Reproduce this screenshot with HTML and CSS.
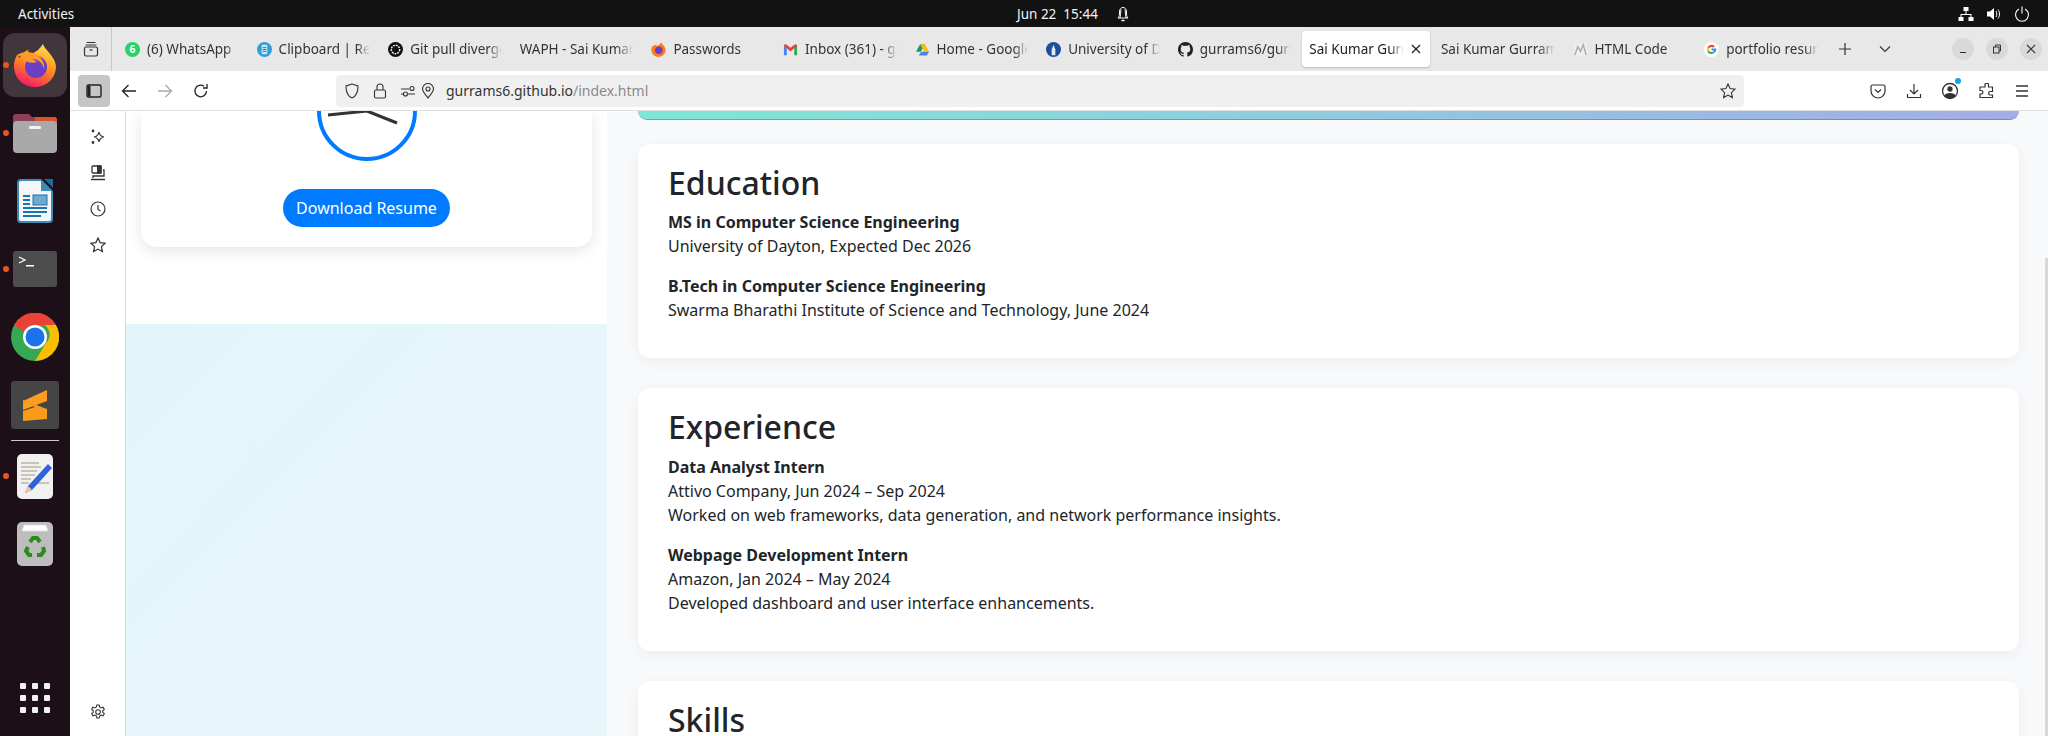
FILE: index.html
```html
<!DOCTYPE html>
<html lang="en">
<head>
    <meta charset="UTF-8">
    <meta name="viewport" content="width=device-width, initial-scale=1.0">
    <title>Sai Kumar Gurram</title>
    <link rel="stylesheet" href="styles.css">
</head>
<body>
    <header class="topbar">
        <span class="activities">Activities</span>
        <div class="topbar-clock">
            <span>Jun 22&nbsp;&nbsp;15:44</span>
            <svg class="bell" width="14" height="16" viewBox="0 0 14 16" fill="none" stroke="#fff" stroke-width="1"><path d="M2 12c1.500-1.500 1.500-3 1.500-6C3.500 3 5 1.500 7 1.500S10.500 3 10.500 6c0 3 0 4.500 1.500 6z"/><path d="M5 3.500C4.500 7 4.500 10 4 12M9 3.500c.5 3.500.5 6.500 1 8.500"/><path d="M5.500 14.500h3" stroke-width="1.500"/></svg>
        </div>
        <div class="topbar-status">
            <svg width="16" height="16" viewBox="0 0 16 16" fill="#fff"><rect x="5.500" y="1" width="5" height="4"/><rect x="0.500" y="11" width="5" height="4"/><rect x="10.500" y="11" width="5" height="4"/><path d="M7.500 5h1v3h5v3h-1V9h-9v2h-1V8h5z"/></svg>
            <svg width="16" height="16" viewBox="0 0 16 16" fill="#fff"><path d="M1 5.500h3L8 2v12l-4-3.500H1z"/><path d="M10 5c1 1.500 1 4.500 0 6M12 3.500c2 2.500 2 6.500 0 9" fill="none" stroke="#fff"/></svg>
            <svg width="16" height="16" viewBox="0 0 16 16" fill="none" stroke="#fff" stroke-width="1.100"><path d="M5 3a6.500 6.500 0 1 0 6 0M8 .5v7"/></svg>
        </div>
    </header>

    <div class="desktop">
        <nav class="dock">
            <div class="dock-item dock-item-active">
                <i class="dock-dot"></i>
                <svg width="44" height="44" viewBox="0 0 44 44">
                    <defs>
                        <linearGradient id="fx" x1="0.700" y1="0" x2="0.300" y2="1"><stop offset="0" stop-color="#ffe14a"/><stop offset="0.500" stop-color="#ff8a1f"/><stop offset="1" stop-color="#f5156c"/></linearGradient>
                    </defs>
                    <path d="M30 1c1 5 12 12 13 22 0 12-9 21-21 21S1 35 1 23c0-5 2-10 4-12 0 2 1 3 2 4 1-4 6-8 9-8-2 3-3 4-3 5 5-1 11-2 17-11z" fill="url(#fx)"/>
                    <circle cx="23" cy="24" r="11" fill="#6b3fc4"/>
                    <path d="M4 12c6-4 14-4 20 0 5 3 8 8 7 14-1-6-6-10-12-10 3 1 5 3 5 3-6 2-12 0-15-5z" fill="#ff9a2a"/>
                </svg>
            </div>
            <div class="dock-item">
                <i class="dock-dot"></i>
                <svg width="44" height="40" viewBox="0 0 44 40">
                    <path d="M0 4a3 3 0 0 1 3-3h13l3 3h22a3 3 0 0 1 3 3v10H0z" fill="#8f3f58"/>
                    <path d="M22 4h19a3 3 0 0 1 3 3v10H22z" fill="#d3562f"/>
                    <rect y="8" width="44" height="32" rx="4" fill="#a9a9a9"/>
                    <rect x="16" y="13" width="12" height="3" rx="1" fill="#f2f2f2"/>
                </svg>
            </div>
            <div class="dock-item">
                <svg width="36" height="44" viewBox="0 0 36 44">
                    <path d="M4 0h20l12 12v28a4 4 0 0 1-4 4H4a4 4 0 0 1-4-4V4a4 4 0 0 1 4-4z" fill="#3d8cb8"/>
                    <path d="M4 2h20v10h10v28a2 2 0 0 1-2 2H4a2 2 0 0 1-2-2V4a2 2 0 0 1 2-2z" fill="#f4f6f7"/>
                    <path d="M27 0h9v9z" fill="#1a6c9c"/>
                    <rect x="6" y="16" width="7" height="2" fill="#1a75ad"/><rect x="6" y="20" width="7" height="2" fill="#1a75ad"/><rect x="6" y="24" width="7" height="2" fill="#1a75ad"/>
                    <rect x="16" y="16" width="14" height="10" fill="#6fa9cf" stroke="#1a75ad"/>
                    <rect x="6" y="28" width="24" height="2" fill="#1a75ad"/><rect x="6" y="32" width="24" height="2" fill="#1a75ad"/><rect x="6" y="36" width="18" height="2" fill="#1a75ad"/>
                </svg>
            </div>
            <div class="dock-item">
                <i class="dock-dot"></i>
                <svg width="44" height="36" viewBox="0 0 44 36">
                    <rect width="44" height="36" rx="3" fill="#4d4d4d"/>
                    <path d="M6 6l6 3-6 3" fill="none" stroke="#fff" stroke-width="1.300"/>
                    <rect x="13" y="14" width="8" height="1.500" fill="#fff"/>
                </svg>
            </div>
            <div class="dock-item">
                <svg width="48" height="48" viewBox="0 0 48 48">
                    <circle cx="24" cy="24" r="24" fill="#34a853"/>
                    <path d="M3 12A24 24 0 0 1 45 12H24a12 12 0 0 0-11 7z" fill="#ea4335"/>
                    <path d="M45 12a24 24 0 0 1-21 36l11-18a12 12 0 0 0-1-18z" fill="#fbbc04"/>
                    <circle cx="24" cy="24" r="12" fill="#fff"/>
                    <circle cx="24" cy="24" r="9.500" fill="#1a73e8"/>
                </svg>
            </div>
            <div class="dock-item">
                <svg width="48" height="48" viewBox="0 0 48 48">
                    <rect width="48" height="48" rx="3" fill="#454545"/>
                    <path d="M12 20L36 9v11L12 29z" fill="#ff9d1f"/>
                    <path d="M12 29l24 9v-11L12 18z" fill="#f08c14" opacity="0"/>
                    <path d="M12 20l24 8.500v11L12 31z" fill="#ff9d1f" opacity="0"/>
                    <path d="M12 19l24 9v10L12 40V30l12-4-12-4z" fill="#fa9a1a"/>
                </svg>
            </div>
            <hr class="dock-sep">
            <div class="dock-item">
                <i class="dock-dot"></i>
                <svg width="36" height="45" viewBox="0 0 36 45">
                    <rect width="36" height="45" rx="5" fill="#f1f1f1"/>
                    <path d="M4 9h18M4 13h20M4 17h16M4 21h14M4 25h10M4 29h8M20 29h12" stroke="#c8c4b6" stroke-width="2"/>
                    <path d="M31 10l-20 22-3 7 7-3 20-22z" fill="#2f62d8"/>
                    <path d="M8 39l3-7 4 4z" fill="#f6c79a"/>
                </svg>
            </div>
            <div class="dock-item">
                <svg width="36" height="44" viewBox="0 0 36 44">
                    <rect width="36" height="44" rx="5" fill="#bdbdbd"/>
                    <path d="M5 9l2-6h22l2 6z" fill="#fff" stroke="#ddd"/>
                    <g fill="none" stroke="#2c8a1f" stroke-width="4">
                        <path d="M13 20l3-4h4l3 4"/>
                        <path d="M26 25l1 4-3 4h-4"/>
                        <path d="M15 33h-3l-3-4 2-4"/>
                    </g>
                </svg>
            </div>
            <div class="dock-item dock-apps">
                <div class="apps-grid">
                    <i></i><i></i><i></i><i></i><i></i><i></i><i></i><i></i><i></i>
                </div>
            </div>
        </nav>

        <div class="window">
            <div class="tabbar">
                <div class="tab-view">
                    <svg width="16" height="16" viewBox="0 0 16 16" fill="none" stroke="#333" stroke-width="1.200"><path d="M3.500 1.500h9M2.500 4h11"/><rect x="1.500" y="6" width="13" height="9" rx="1.500"/><path d="M6.500 9h3"/></svg>
                </div>
                <div class="tabs">
                    <div class="tab"><svg class="favicon" viewBox="0 0 16 16"><circle cx="8" cy="8" r="8" fill="#25d366"/><text x="8" y="12" class="fav-num">6</text></svg><span class="tab-title">(6) WhatsApp</span></div>
                    <div class="tab"><svg class="favicon" viewBox="0 0 16 16"><circle cx="8" cy="8" r="8" fill="#2f9fdc"/><rect x="5" y="3" width="6" height="10" rx="1" fill="#cde9f7"/><path d="M6 6h4M6 8h4M6 10h4" stroke="#2f6f9c"/></svg><span class="tab-title">Clipboard | Resoomer</span></div>
                    <div class="tab"><svg class="favicon" viewBox="0 0 16 16"><circle cx="8" cy="8" r="8" fill="#111"/><circle cx="8" cy="8" r="4.500" fill="none" stroke="#fff" stroke-width="1.500" stroke-dasharray="2 1"/></svg><span class="tab-title">Git pull divergent branches</span></div>
                    <div class="tab tab-nofav"><span class="tab-title">WAPH - Sai Kumar Gurram</span></div>
                    <div class="tab"><svg class="favicon" viewBox="0 0 44 44"><path d="M30 1c1 5 12 12 13 22 0 12-9 21-21 21S1 35 1 23c0-5 2-10 4-12 3 0 8-4 12-4-2 3-3 4-3 5 5-1 11-2 16-11z" fill="#ff7a1f"/><circle cx="23" cy="24" r="11" fill="#6b3fc4"/></svg><span class="tab-title">Passwords</span></div>
                    <div class="tab"><svg class="favicon" viewBox="0 0 16 16"><path d="M1 14V4l3 1v9z" fill="#4285f4"/><path d="M12 14V5l3-1v10z" fill="#34a853"/><path d="M1 4c0-2 2-2 3-1l4 3 4-3c1-1 3-1 3 1l-7 6z" fill="#ea4335"/></svg><span class="tab-title">Inbox (361) - gurrams6@</span></div>
                    <div class="tab"><svg class="favicon" viewBox="0 0 16 16"><path d="M5.500 2h5L6 10H1z" fill="#0f9d58" transform="translate(0 .5)"/><path d="M10.500 2.500L15 10.500h-5L5.500 2.500z" fill="#fbbc04"/><path d="M4 14.500l2.500-4H15l-2.500 4z" fill="#4285f4"/></svg><span class="tab-title">Home - Google Drive</span></div>
                    <div class="tab"><svg class="favicon" viewBox="0 0 16 16"><circle cx="8" cy="8" r="8" fill="#1c4c9c"/><path d="M8 3l2 5v6H6V8z" fill="#dfe8f5"/></svg><span class="tab-title">University of Dayton</span></div>
                    <div class="tab"><svg class="favicon" viewBox="0 0 16 16"><path fill="#222" d="M8 0C3.580 0 0 3.580 0 8c0 3.540 2.290 6.530 5.470 7.590.4.070.55-.17.55-.38v-1.340c-2.230.48-2.700-1.080-2.700-1.080-.36-.92-.89-1.170-.89-1.170-.73-.5.050-.49.050-.49.8.060 1.220.83 1.220.83.710 1.220 1.870.870 2.330.660.070-.520.280-.870.510-1.070-1.780-.2-3.640-.890-3.640-3.950 0-.870.310-1.590.820-2.150-.080-.2-.360-1.020.080-2.120 0 0 .670-.210 2.200.820A7.700 7.700 0 0 1 8 3.870c.680 0 1.360.090 2 .270 1.530-1.040 2.200-.820 2.200-.820.440 1.100.160 1.920.080 2.120.510.560.820 1.270.820 2.150 0 3.070-1.870 3.750-3.650 3.950.290.250.540.730.540 1.480v2.190c0 .210.150.460.550.380A8 8 0 0 0 16 8c0-4.420-3.580-8-8-8z"/></svg><span class="tab-title">gurrams6/gurrams6.github.io</span></div>
                    <div class="tab tab-nofav tab-active"><span class="tab-title">Sai Kumar Gurram</span><svg class="tab-close" width="10" height="10" viewBox="0 0 10 10" stroke="#222" stroke-width="1.300"><path d="M1 1l8 8M9 1l-8 8"/></svg></div>
                    <div class="tab tab-nofav"><span class="tab-title">Sai Kumar Gurram</span></div>
                    <div class="tab"><svg class="favicon" viewBox="0 0 16 16" fill="none" stroke="#aaa"><rect x="1" y="1" width="14" height="14" fill="#eee" stroke="none"/><path d="M2 14l3-9 3 5 3-7 3 11" stroke-width="1.500"/></svg><span class="tab-title">HTML Code</span></div>
                    <div class="tab"><svg class="favicon" viewBox="0 0 16 16"><circle cx="8" cy="8" r="8" fill="#fff"/><path d="M8 3a5 5 0 0 1 3.500 1.400L10 6a3 3 0 0 0-4.700 1L3.600 5.700A5 5 0 0 1 8 3z" fill="#ea4335"/><path d="M3.600 5.700L5.300 7a3 3 0 0 0 0 2l-1.700 1.300a5 5 0 0 1 0-4.600z" fill="#fbbc04"/><path d="M3.600 10.300L5.300 9A3 3 0 0 0 10 10l1.600 1.300A5 5 0 0 1 3.600 10.300z" fill="#34a853"/><path d="M13 8.500a5 5 0 0 1-1.400 2.800L10 10a2 2 0 0 0 .8-1H8V7h5z" fill="#4285f4"/></svg><span class="tab-title">portfolio resume</span></div>
                </div>
                <svg class="tab-plus" width="14" height="14" viewBox="0 0 14 14" stroke="#333" stroke-width="1.200"><path d="M7 1v12M1 7h12"/></svg>
                <svg class="tab-list" width="12" height="8" viewBox="0 0 12 8" fill="none" stroke="#333" stroke-width="1.100"><path d="M1 1.500l5 5 5-5"/></svg>
                <div class="win-buttons">
                    <span class="win-btn"><svg width="10" height="10" viewBox="0 0 10 10" stroke="#333"><path d="M2 8.500h6"/></svg></span>
                    <span class="win-btn"><svg width="10" height="10" viewBox="0 0 10 10" fill="none" stroke="#333"><rect x="1.500" y="3" width="5.500" height="6"/><path d="M3.500 3V1h5v6H7"/></svg></span>
                    <span class="win-btn"><svg width="10" height="10" viewBox="0 0 10 10" stroke="#333" stroke-width="1.100"><path d="M1 1l8 8M9 1l-8 8"/></svg></span>
                </div>
            </div>

            <div class="toolbar">
                <button class="sidebar-toggle"><svg width="16" height="16" viewBox="0 0 16 16" fill="none" stroke="#222" stroke-width="1.400"><rect x="1" y="2" width="14" height="12" rx="1.500"/><rect x="1.500" y="2.500" width="3" height="11" fill="#222" stroke="none"/></svg></button>
                <span class="tool-btn"><svg width="16" height="16" viewBox="0 0 16 16" fill="none" stroke="#222" stroke-width="1.300"><path d="M15 8H1.500M7.500 2l-6 6 6 6"/></svg></span>
                <span class="tool-btn"><svg width="16" height="16" viewBox="0 0 16 16" fill="none" stroke="#aaa" stroke-width="1.300"><path d="M1 8h13.500M8.500 2l6 6-6 6"/></svg></span>
                <span class="tool-btn"><svg width="16" height="16" viewBox="0 0 16 16" fill="none" stroke="#222" stroke-width="1.300"><path d="M13.500 8A5.800 5.800 0 1 1 11 3.200"/><path d="M14 1v4h-4" /></svg></span>
                <div class="urlbar">
                    <svg class="url-shield" width="16" height="16" viewBox="0 0 16 16" fill="none" stroke="#333" stroke-width="1.100"><path d="M8 1L2 3c0 6 1 10 6 12 5-2 6-6 6-12z"/></svg>
                    <svg class="url-lock" width="16" height="16" viewBox="0 0 16 16" fill="none" stroke="#333" stroke-width="1.100"><rect x="2.500" y="7" width="11" height="8" rx="1.500"/><path d="M5 7V4a3 3 0 0 1 6 0v3"/></svg>
                    <svg class="url-perm" width="16" height="16" viewBox="0 0 16 16" fill="none" stroke="#333" stroke-width="1.100"><path d="M1 6h8M1 11h3M8 11h7"/><circle cx="12" cy="5.500" r="2"/><circle cx="5.500" cy="11" r="2"/></svg>
                    <svg class="url-pin" width="16" height="16" viewBox="0 0 16 16" fill="none" stroke="#333" stroke-width="1.100"><path d="M8 15C5 11 2.500 8.500 2.500 6a5.500 5.500 0 0 1 11 0c0 2.500-2.500 5-5.500 9z"/><circle cx="8" cy="6" r="2"/></svg>
                    <span class="url-text">gurrams6.github.io<span class="url-path">/index.html</span></span>
                    <svg class="url-star" width="16" height="16" viewBox="0 0 16 16" fill="none" stroke="#333" stroke-width="1.100"><path d="M8 1l2.100 4.600 5 .6-3.700 3.400 1 5L8 12.100 3.600 14.600l1-5L.9 6.200l5-.6z"/></svg>
                </div>
                <span class="tool-btn"><svg width="16" height="16" viewBox="0 0 16 16" fill="none" stroke="#333" stroke-width="1.200"><path d="M2.500 2h11A1.500 1.500 0 0 1 15 3.500V8a7 7 0 0 1-14 0V3.500A1.500 1.500 0 0 1 2.500 2z"/><path d="M5 6.500l3 3 3-3"/></svg></span>
                <span class="tool-btn"><svg width="16" height="16" viewBox="0 0 16 16" fill="none" stroke="#333" stroke-width="1.200"><path d="M8 1v9.500M4 7l4 4 4-4M1.500 11v3.500h13V11"/></svg></span>
                <span class="tool-btn tool-account"><svg width="18" height="18" viewBox="0 0 18 18" fill="none" stroke="#333" stroke-width="1.300"><circle cx="9" cy="9" r="7.500"/><circle cx="9" cy="7" r="2" fill="#333"/><path d="M4 14c1-3 9-3 10 0-2 2-8 2-10 0z" fill="#333"/></svg><i class="account-badge"></i></span>
                <span class="tool-btn"><svg width="16" height="16" viewBox="0 0 16 16" fill="none" stroke="#333" stroke-width="1.200"><path d="M7 1.500a1.800 1.800 0 0 1 3.500 0V4h4v4.500H12a1.800 1.800 0 0 0 0 3.500h2.500v2.500H2v-3.500h1.500a1.800 1.800 0 0 0 0-3.500H2V4h5z"/></svg></span>
                <span class="tool-btn"><svg width="16" height="16" viewBox="0 0 16 16" stroke="#333" stroke-width="1.300"><path d="M2 3h12M2 8h12M2 13h12"/></svg></span>
            </div>

            <div class="browser-body">
                <aside class="sidebar">
                    <svg width="16" height="16" viewBox="0 0 16 16" fill="none" stroke="#333" stroke-width="1.200"><path d="M9 3c.5 3 1.500 4.500 5 5-3.500.5-4.500 2-5 5-.5-3-1.500-4.500-5-5 3.500-.5 4.500-2 5-5z"/><circle cx="3" cy="2" r=".8" fill="#333"/><circle cx="3" cy="13.500" r=".8" fill="#333"/></svg>
                    <svg width="16" height="16" viewBox="0 0 16 16" fill="none" stroke="#333" stroke-width="1.300"><rect x="2" y="1" width="9" height="7" rx="1"/><path d="M7 1h4v7H7" fill="#333"/><path d="M13 5h1v6H3v2M1 14.500h14" /></svg>
                    <svg width="16" height="16" viewBox="0 0 16 16" fill="none" stroke="#333" stroke-width="1.200"><circle cx="8" cy="8" r="7"/><path d="M8 4v4.500l2.500 1.500"/></svg>
                    <svg width="16" height="16" viewBox="0 0 16 16" fill="none" stroke="#333" stroke-width="1.200"><path d="M8 1l2.100 4.600 5 .6-3.700 3.400 1 5L8 12.100 3.600 14.600l1-5L.9 6.200l5-.6z"/></svg>
                    <svg class="sidebar-gear" width="16" height="16" viewBox="0 0 16 16" fill="none" stroke="#333" stroke-width="1.100"><circle cx="8" cy="8" r="2.300"/><path d="M6.800 1h2.400l.4 2 1.600.9 1.900-.7 1.200 2.100-1.500 1.300v1.800l1.500 1.300-1.200 2.100-1.900-.7-1.600.9-.4 2H6.800l-.4-2-1.600-.9-1.900.7-1.200-2.100 1.500-1.300V6.600L1.700 5.300l1.200-2.100 1.900.7 1.600-.9z"/></svg>
                </aside>

                <div class="page">
                    <div class="left-col">
                        <div class="left-top">
                            <div class="profile-card">
                                <svg class="clock" width="100" height="52" viewBox="0 -50 100 52">
                                    <circle cx="50" cy="-48" r="48" fill="#fff" stroke="#007bff" stroke-width="4" transform="translate(0 -2)"/>
                                    <path d="M50 -50L11 -46" stroke="#333" stroke-width="3"/>
                                    <path d="M50 -50L80 -38" stroke="#333" stroke-width="3"/>
                                </svg>
                                <a class="btn-resume" href="#">Download Resume</a>
                            </div>
                        </div>
                        <div class="left-panel"></div>
                    </div>

                    <main class="main-col">
                        <div class="banner"></div>
                        <section class="card">
                            <h2>Education</h2>
                            <p><strong>MS in Computer Science Engineering</strong><br>University of Dayton, Expected Dec 2026</p>
                            <p><strong>B.Tech in Computer Science Engineering</strong><br>Swarma Bharathi Institute of Science and Technology, June 2024</p>
                        </section>
                        <section class="card">
                            <h2>Experience</h2>
                            <p><strong>Data Analyst Intern</strong><br>Attivo Company, Jun 2024 – Sep 2024<br>Worked on web frameworks, data generation, and network performance insights.</p>
                            <p><strong>Webpage Development Intern</strong><br>Amazon, Jan 2024 – May 2024<br>Developed dashboard and user interface enhancements.</p>
                        </section>
                        <section class="card">
                            <h2>Skills</h2>
                        </section>
                    </main>
                    <div class="scroll-thumb"></div>
                </div>
            </div>
        </div>
    </div>
</body>
</html>
```

FILE: styles.css
```css
html, body {
    margin: 0;
    padding: 0;
    height: 736px;
    overflow: hidden;
}
body {
    display: flex;
    flex-direction: column;
    font-family: "DejaVu Sans", sans-serif;
    font-size: 16px;
    line-height: 24px;
    color: #212529;
}

/* ubuntu top bar */
.topbar {
    height: 27px;
    flex: none;
    display: flex;
    align-items: center;
    position: relative;
    background-color: #121212;
    color: #f2f2f2;
    font-family: "Noto Sans", sans-serif;
    font-size: 13.5px;
}
.activities {
    margin-left: 18px;
}
.topbar-clock {
    position: absolute;
    left: 1017px;
    display: flex;
    align-items: center;
    gap: 18px;
}
.topbar-status {
    margin-left: auto;
    margin-right: 18px;
    display: flex;
    gap: 12px;
}

/* dock */
.desktop {
    flex: 1;
    display: flex;
    min-height: 0;
}
.dock {
    width: 70px;
    flex: none;
    box-sizing: border-box;
    padding: 4px 0;
    display: flex;
    flex-direction: column;
    background-color: #1d0f18;
}
.dock-item {
    height: 68px;
    flex: none;
    display: flex;
    align-items: center;
    justify-content: center;
    position: relative;
}
.dock-item-active::before {
    content: "";
    position: absolute;
    left: 3px;
    right: 3px;
    top: 2px;
    bottom: 2px;
    border-radius: 12px;
    background-color: #41363c;
}
.dock-item svg {
    position: relative;
}
.dock-dot {
    position: absolute;
    left: 3px;
    top: 31px;
    width: 6px;
    height: 6px;
    border-radius: 50%;
    background-color: #e95420;
    z-index: 1;
}
.dock-sep {
    width: 48px;
    height: 1px;
    margin: 1px auto 1px;
    border: 0;
    background-color: #cfcbcd;
    flex: none;
}
.dock-apps {
    margin-top: auto;
}
.apps-grid {
    display: grid;
    grid-template-columns: repeat(3, 6px);
    gap: 6px;
}
.apps-grid i {
    width: 6px;
    height: 6px;
    border-radius: 1px;
    background-color: #f2f2f2;
}

/* firefox window */
.window {
    flex: 1;
    min-width: 0;
    display: flex;
    flex-direction: column;
    font-family: "Noto Sans", sans-serif;
}
.tabbar {
    height: 44px;
    flex: none;
    display: flex;
    align-items: center;
    background-color: #e8e8e8;
    font-size: 13.5px;
    color: #333;
}
.tab-view {
    width: 42px;
    height: 44px;
    box-sizing: border-box;
    flex: none;
    display: flex;
    align-items: center;
    justify-content: center;
    padding-left: 0;
    border-right: 1px solid #c8c8c8;
}
.tabs {
    display: flex;
    gap: 4px;
    margin-left: 6px;
    flex: none;
}
.tab {
    width: 127.6px;
    height: 36px;
    box-sizing: border-box;
    padding: 0 7px;
    display: flex;
    align-items: center;
    gap: 7px;
    border-radius: 4px;
}
.tab-active {
    background-color: #fff;
    box-shadow: 0 1px 2px rgba(0, 0, 0, 0.2);
    color: #222;
}
.favicon {
    width: 15px;
    height: 15px;
    flex: none;
}
.fav-num {
    font-size: 11px;
    font-weight: bold;
    fill: #fff;
    text-anchor: middle;
}
.tab-title {
    flex: 1;
    min-width: 0;
    white-space: nowrap;
    overflow: hidden;
    -webkit-mask-image: linear-gradient(to right, #000 85%, transparent);
    mask-image: linear-gradient(to right, #000 85%, transparent);
}
.tab-close {
    flex: none;
    margin-right: 2px;
}
.tab-plus {
    margin-left: 13px;
    flex: none;
}
.tab-list {
    margin-left: 27px;
    flex: none;
}
.win-buttons {
    margin-left: auto;
    margin-right: 6px;
    display: flex;
    gap: 12px;
}
.win-btn {
    width: 22px;
    height: 22px;
    border-radius: 50%;
    background-color: #d9d9d9;
    display: flex;
    align-items: center;
    justify-content: center;
}

.toolbar {
    height: 40px;
    flex: none;
    box-sizing: border-box;
    padding-left: 8px;
    display: flex;
    align-items: center;
    background-color: #fff;
    border-bottom: 1px solid #e0e0e0;
}
.sidebar-toggle {
    width: 32px;
    height: 32px;
    padding: 0;
    border: 0;
    border-radius: 4px;
    background-color: #c6c6c6;
    display: flex;
    align-items: center;
    justify-content: center;
    margin-right: 1px;
}
.tool-btn {
    width: 36px;
    height: 32px;
    flex: none;
    display: flex;
    align-items: center;
    justify-content: center;
    position: relative;
}
.account-badge {
    position: absolute;
    right: 7px;
    top: 3px;
    width: 6px;
    height: 6px;
    border-radius: 50%;
    background-color: #0ca5e9;
}
.urlbar {
    width: 1408px;
    height: 32px;
    flex: none;
    margin: 0 116px 0 117px;
    box-sizing: border-box;
    padding: 0 8.5px 0 8px;
    display: flex;
    align-items: center;
    border-radius: 4px;
    background-color: #f0f0f0;
    font-size: 14px;
    color: #333;
}
.url-lock, .url-perm {
    margin-left: 12px;
}
.url-pin {
    margin-left: 4px;
}
.url-text {
    margin-left: 10px;
}
.url-path {
    color: #8a8a8a;
}
.url-star {
    margin-left: auto;
}

.browser-body {
    flex: 1;
    min-height: 0;
    display: flex;
}
.sidebar {
    width: 56px;
    flex: none;
    box-sizing: border-box;
    padding: 18px 0 16px;
    display: flex;
    flex-direction: column;
    align-items: center;
    gap: 20px;
    background-color: #fff;
    border-right: 1px solid #dcdcdc;
}
.sidebar-gear {
    margin-top: auto;
}

/* page content */
.page {
    flex: 1;
    min-width: 0;
    display: flex;
    position: relative;
    overflow: hidden;
}
.left-col {
    width: 481px;
    flex: none;
    display: flex;
    flex-direction: column;
    background-color: #fff;
}
.left-top {
    height: 213px;
    flex: none;
    box-sizing: border-box;
    padding: 0 15px;
}
.profile-card {
    height: 136px;
    box-sizing: border-box;
    display: flex;
    flex-direction: column;
    align-items: center;
    gap: 26px;
    background-color: #fff;
    border-radius: 0 0 15px 15px;
    box-shadow: 0 4px 15px rgba(0, 0, 0, 0.1);
}
.clock {
    display: block;
    flex: none;
}
.btn-resume {
    padding: 7px 13px;
    border-radius: 20px;
    background-color: #007bff;
    color: #fff;
    text-decoration: none;
}
.left-panel {
    flex: 1;
    background: linear-gradient(135deg, #e3f5fb, #e8f6fa);
}
.main-col {
    flex: 1;
    min-width: 0;
    box-sizing: border-box;
    padding: 0 29px 0 31px;
    background-color: #f8f9fb;
}
.banner {
    height: 9px;
    margin-bottom: 24px;
    border-radius: 0 0 12px 12px;
    border-bottom: 1px solid rgba(60, 100, 120, 0.45);
    box-sizing: border-box;
    background: linear-gradient(90deg, #7ee7d6, #a3ade6);
}
.card {
    margin-bottom: 30px;
    padding: 20px 30px;
    background-color: #fff;
    border-radius: 12px;
    box-shadow: 0 4px 15px rgba(0, 0, 0, 0.05);
}
.card h2 {
    margin: 0 0 8px;
    font-size: 32px;
    font-weight: 500;
    line-height: 38.4px;
}
.card p {
    margin: 0 0 16px;
}
.scroll-thumb {
    position: absolute;
    right: 0;
    top: 147px;
    bottom: 0;
    width: 3px;
    background-color: #d8d8d8;
}
```
